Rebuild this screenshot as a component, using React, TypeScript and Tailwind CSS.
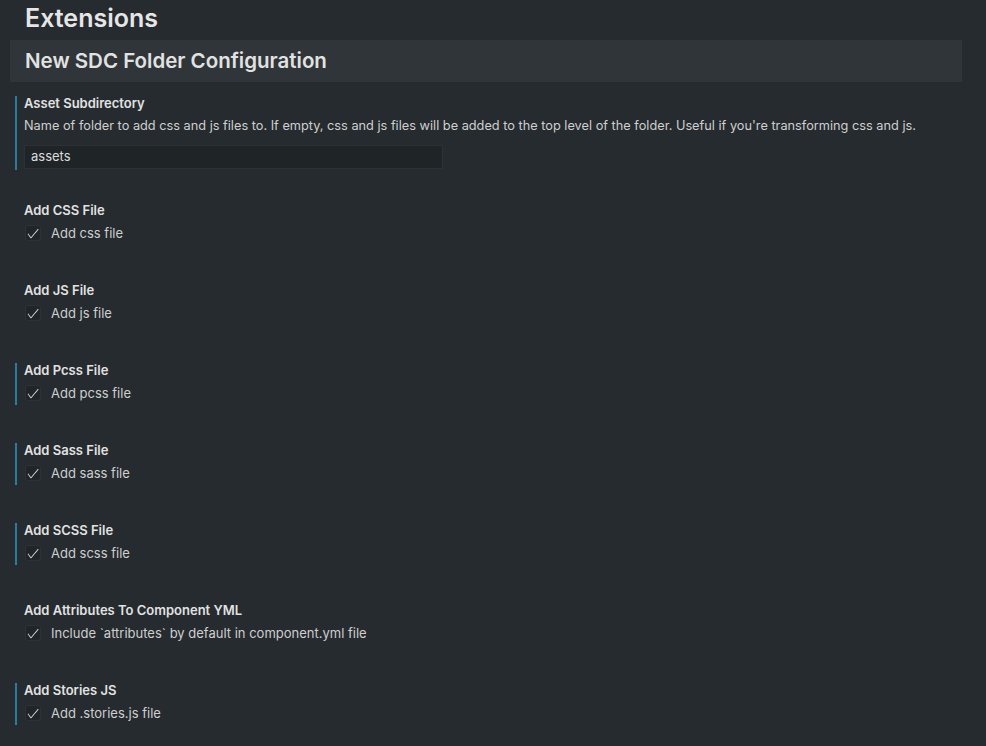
import React from "react";

const font = { fontFamily: "Inter, 'Noto Sans', sans-serif" };

function Check() {
  return (
    <div className="w-4 h-4 rounded-[3px] bg-[#1f2528] border border-[#2c3337] flex items-center justify-center">
      <svg width="15" height="15" viewBox="0 0 16 16">
        <path
          d="M14.431 3.323l-8.47 10-.79-.036-3.35-4.77.818-.574 2.978 4.24 8.051-9.506.764.646z"
          fill="#d4d4d4"
        />
      </svg>
    </div>
  );
}

function BoolSetting({ title, label, bar }: { title: string; label: string; bar: boolean }) {
  return (
    <div className={`ml-[15px] pl-[7px] pb-[4px] mb-[38px] border-l-2 ${bar ? "border-[#2b7c9c]" : "border-transparent"}`}>
      <div className="text-[13px] leading-[14px] font-semibold text-[#e2e2e2]">{title}</div>
      <div className="mt-[8px] flex items-center gap-[10px] pl-[1px]">
        <Check />
        <span className="text-[13px] leading-[16px] text-[#cfcfcf]">{label}</span>
      </div>
    </div>
  );
}

export default function App() {
  const items = [
    { title: "Add CSS File", label: "Add css file", bar: false },
    { title: "Add JS File", label: "Add js file", bar: false },
    { title: "Add Pcss File", label: "Add pcss file", bar: true },
    { title: "Add Sass File", label: "Add sass file", bar: true },
    { title: "Add SCSS File", label: "Add scss file", bar: true },
    { title: "Add Attributes To Component YML", label: "Include `attributes` by default in component.yml file", bar: false },
    { title: "Add Stories JS", label: "Add .stories.js file", bar: true },
  ];
  return (
    <div className="w-[986px] h-[746px] overflow-hidden bg-[#252b2e]" style={font}>
      <div className="pl-[25px] h-[40px] leading-[36px] text-[25px] font-semibold text-[#e6e6e6]">Extensions</div>
      <div className="ml-[10px] w-[952px] h-[42px] bg-[#2f3538] flex items-center pl-[15px]">
        <span className="text-[20.5px] font-semibold text-[#e2e2e2]">New SDC Folder Configuration</span>
      </div>
      <div className="mt-[14px] ml-[15px] pl-[7px] pb-[1px] mb-[33px] border-l-2 border-[#2b7c9c]">
        <div className="text-[13px] leading-[14px] font-semibold text-[#e2e2e2]">Asset Subdirectory</div>
        <div className="mt-[7px] text-[12.75px] leading-[18px] text-[#cfcfcf]">
          Name of folder to add css and js files to. If empty, css and js files will be added to the top level of the folder. Useful if you're transforming css and js.
        </div>
        <div className="mt-[10px] w-[419px] h-[24px] bg-[#1f2427] border border-[#2b3135] flex items-center pl-[6px]">
          <span className="text-[13px] text-[#dcdcdc]">assets</span>
        </div>
      </div>
      {items.map((it) => (
        <BoolSetting key={it.title} {...it} />
      ))}
    </div>
  );
}
